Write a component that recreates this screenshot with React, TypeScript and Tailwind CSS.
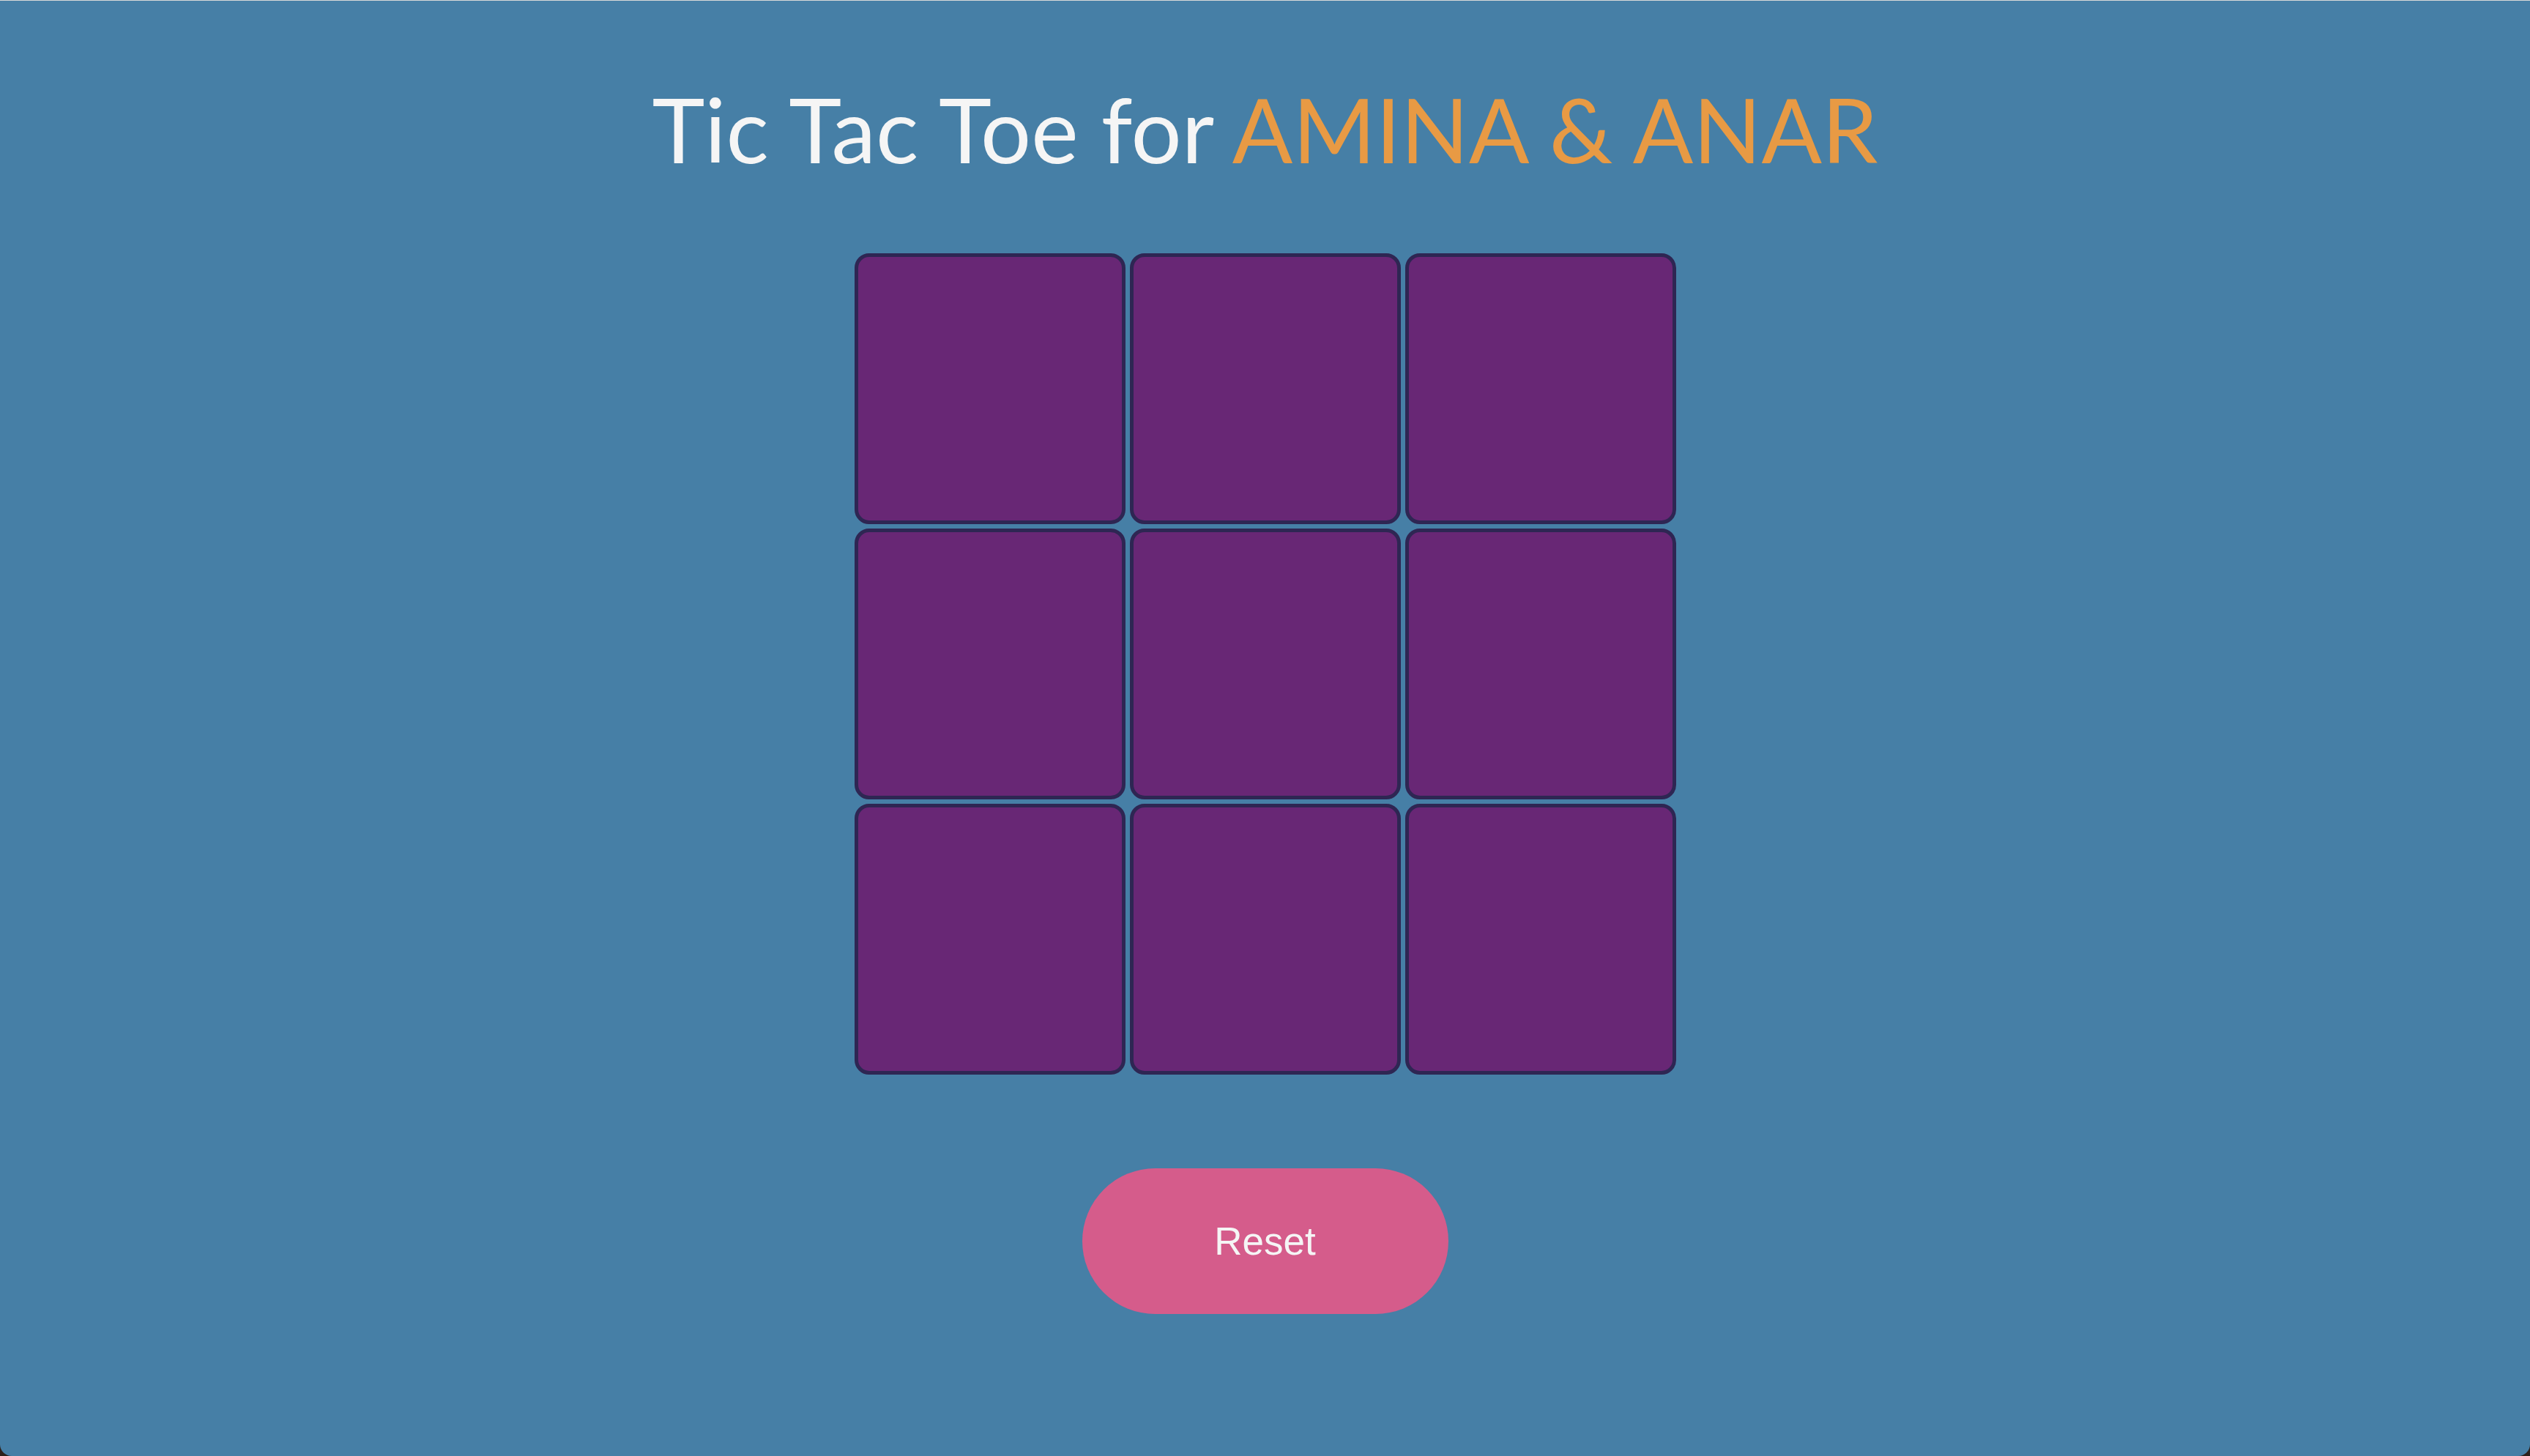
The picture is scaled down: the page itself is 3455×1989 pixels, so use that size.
import { useState } from "react";

export default function App() {
  const [cells, setCells] = useState<(string | null)[]>(Array(9).fill(null));

  return (
    <div className="h-[1989px] w-full bg-[#2d211c]">
      <div className="flex h-full flex-col items-center rounded-b-[16px] border-t border-[#d9d9d9] bg-[#467fa6]">
        <h1 className="mt-[114px] font-['Lato',sans-serif] text-[122px] leading-none font-normal text-[#f5f5f5]">
          Tic Tac Toe for <span className="text-[#e89a44]">AMINA &amp; ANAR</span>
        </h1>

        <div className="mt-[109px] grid grid-cols-[repeat(3,370px)] gap-[6px]">
          {cells.map((c, i) => (
            <button
              key={i}
              onClick={() =>
                setCells((prev) => prev.map((v, j) => (j === i && !v ? "X" : v)))
              }
              className="h-[370px] w-[370px] rounded-[20px] border-[5px] border-[#2e2653] bg-[#682775] font-['Lato',sans-serif] text-[160px] text-[#f5f5f5]"
            >
              {c}
            </button>
          ))}
        </div>

        <button
          onClick={() => setCells(Array(9).fill(null))}
          className="mt-[128px] h-[199px] w-[500px] rounded-full bg-[#d55c8b] font-['Liberation_Sans',Arial,sans-serif] text-[53px] text-[#f5f5f5]"
        >
          Reset
        </button>
      </div>
    </div>
  );
}
